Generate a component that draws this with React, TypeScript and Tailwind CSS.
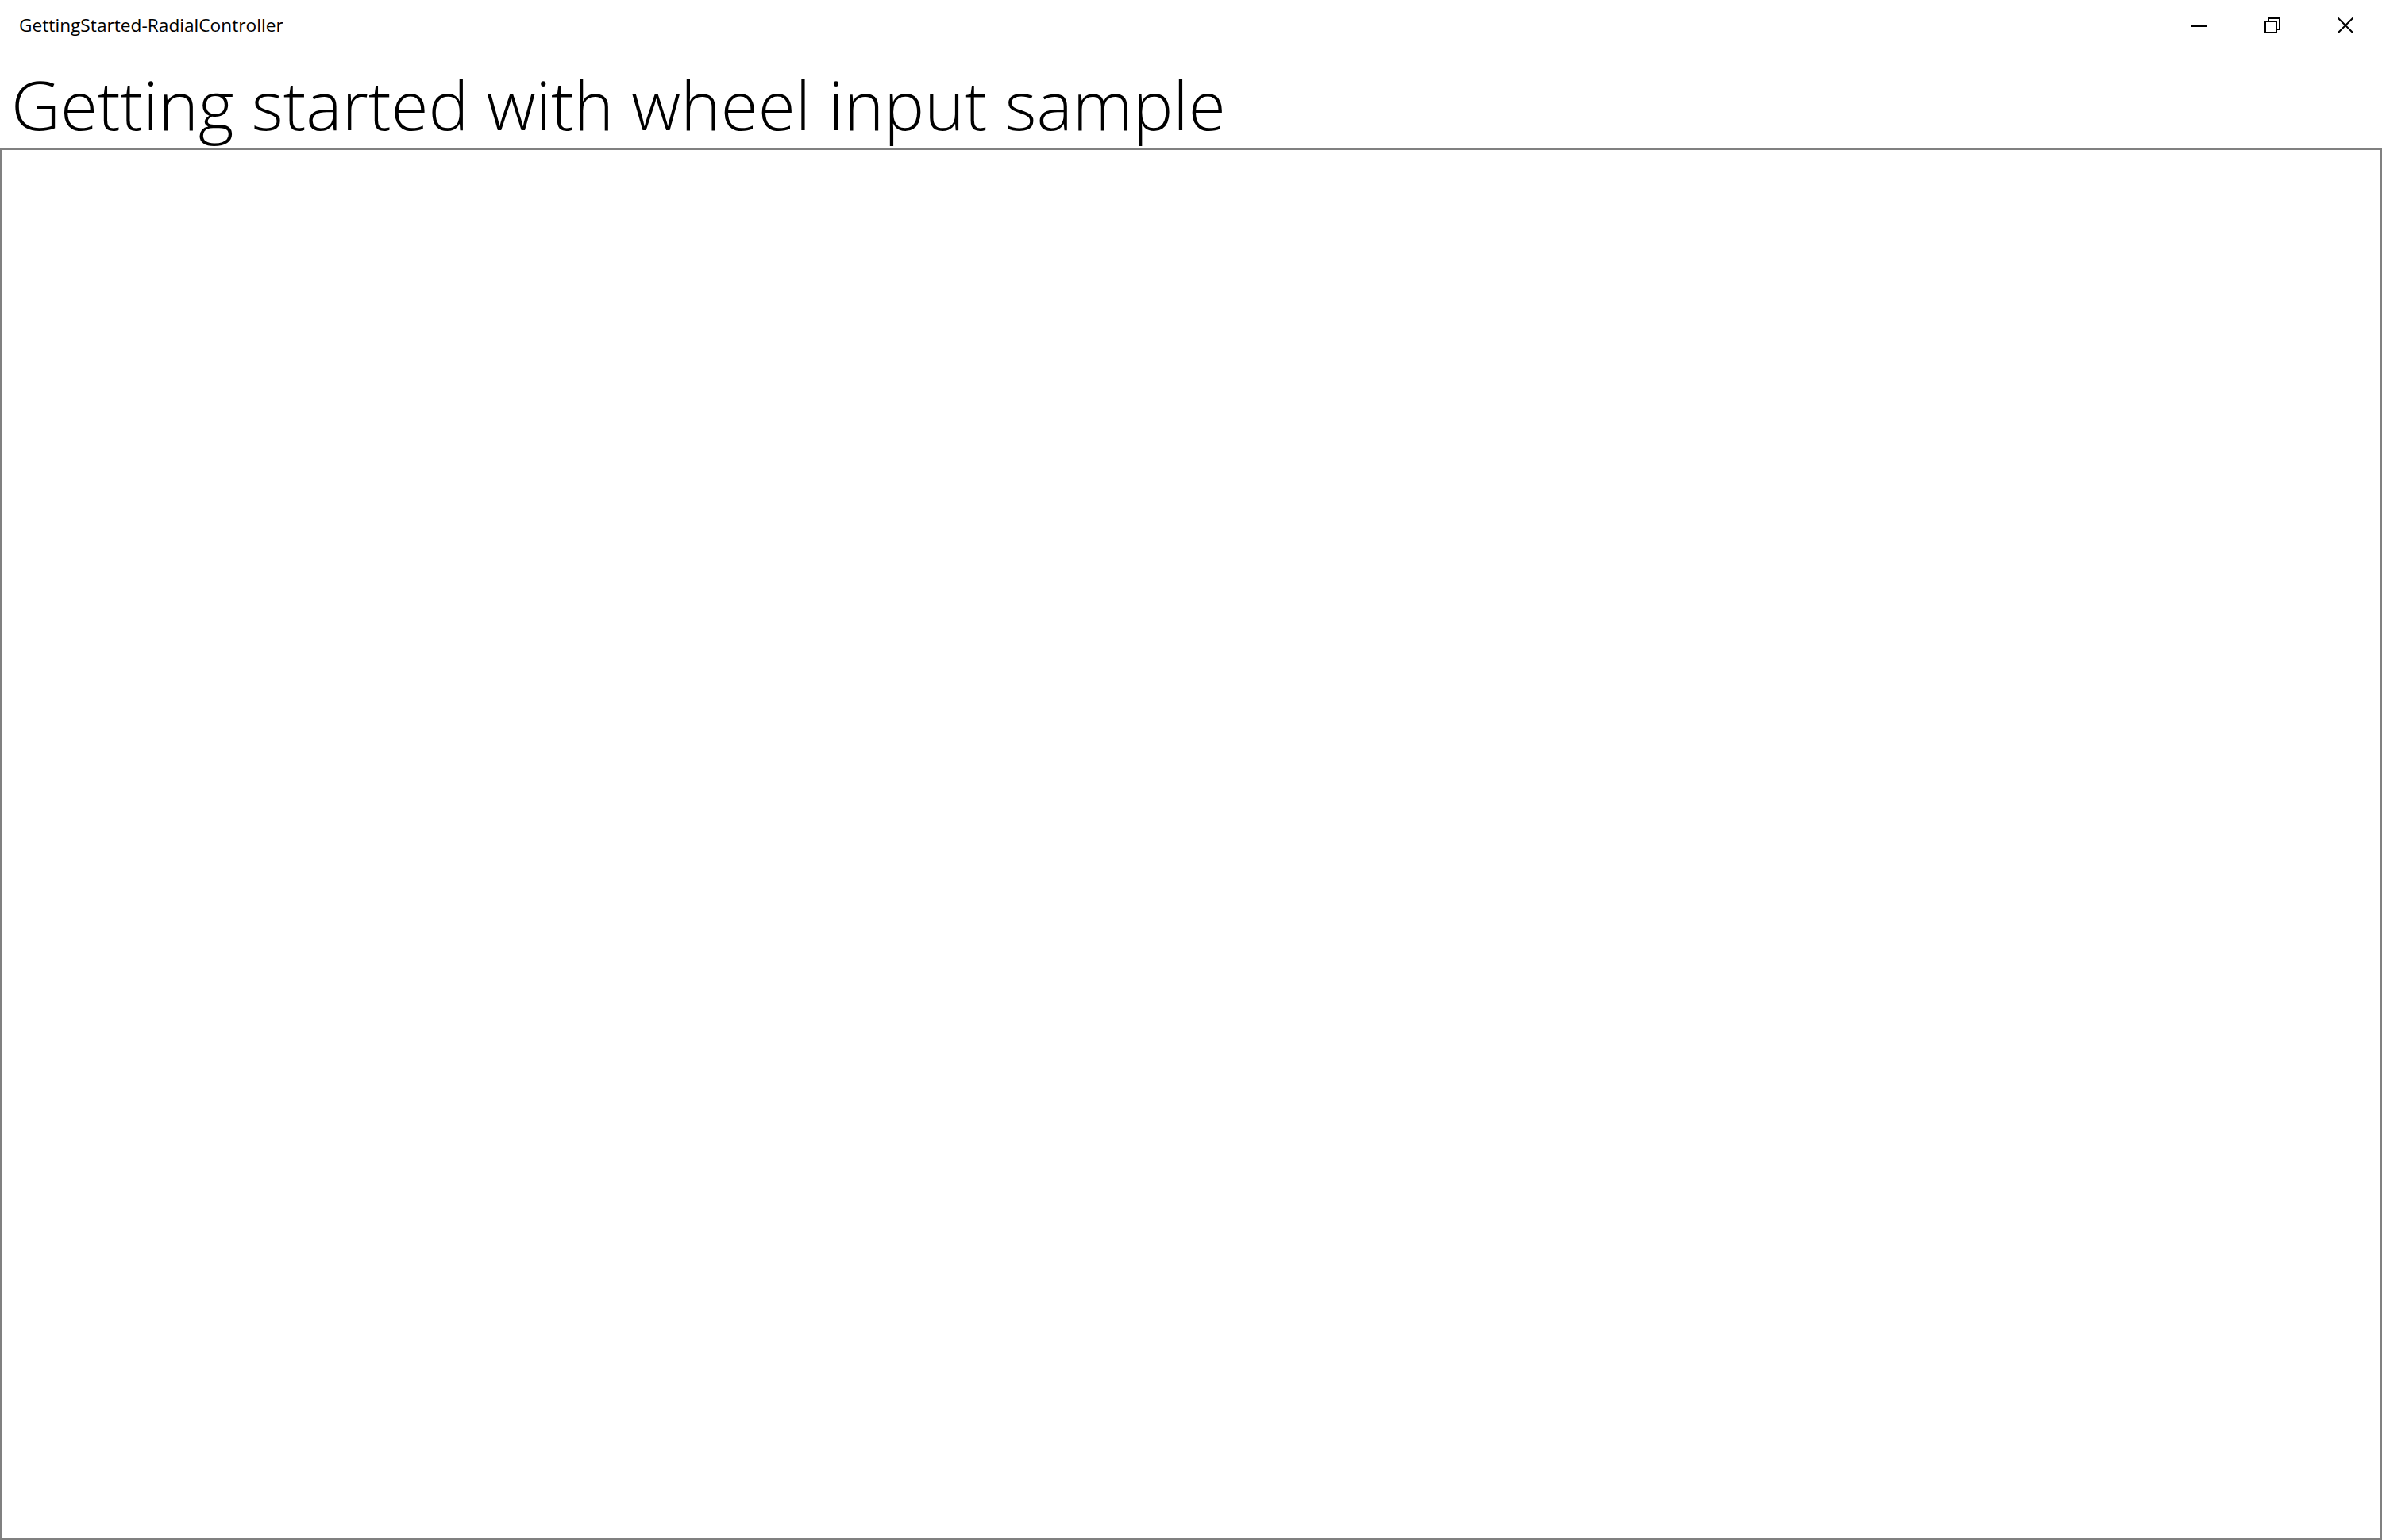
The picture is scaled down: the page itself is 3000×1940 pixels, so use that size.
import React from 'react';

const TitleBar = () => (
  <div className="flex h-[64px] items-center justify-between">
    <div className="pl-[24px] text-[22.7px] text-black" style={{ fontFamily: '"Open Sans", "Noto Sans", sans-serif' }}>
      GettingStarted-RadialController
    </div>
    <div className="flex h-full">
      <button className="flex h-full w-[92px] items-center justify-center">
        <svg width="20" height="20" viewBox="0 0 20 20">
          <path d="M0 11h20" stroke="#000" strokeWidth="2" />
        </svg>
      </button>
      <button className="flex h-full w-[92px] items-center justify-center">
        <svg width="20" height="20" viewBox="0 0 20 20" fill="none" stroke="#000" strokeWidth="2">
          <rect x="1" y="5" width="14" height="14" />
          <path d="M5 5V1h14v14h-4" />
        </svg>
      </button>
      <button className="flex h-full w-[92px] items-center justify-center">
        <svg width="20" height="20" viewBox="0 0 20 20" fill="none" stroke="#000" strokeWidth="2">
          <path d="M0 0L20 20M20 0L0 20" />
        </svg>
      </button>
    </div>
  </div>
);

export default function App() {
  return (
    <div className="flex h-[1940px] w-full flex-col bg-white">
      <TitleBar />
      <h1
        className="h-[123px] pl-[14px] text-[85.6px] font-light leading-[135px] text-black whitespace-nowrap"
        style={{ fontFamily: '"Open Sans", "Noto Sans", sans-serif' }}
      >
        Getting started with wheel input sample
      </h1>
      <div className="flex-1 border-2 border-[#808080]" />
    </div>
  );
}
